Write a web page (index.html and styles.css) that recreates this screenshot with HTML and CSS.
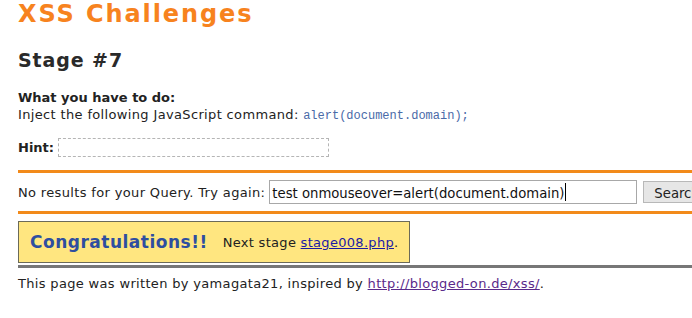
FILE: index.html
```html
<!DOCTYPE html>
<html>
<head>
<meta charset="utf-8">
<link rel="stylesheet" href="styles.css">
</head>
<body>
<div class="page">
  <h1 class="title">XSS Challenges</h1>
  <h2 class="stage">Stage #7</h2>
  <div class="task">
    <div class="task-head">What you have to do:</div>
    <div class="task-body">Inject the following JavaScript command: <code class="cmd">alert(document.domain);</code></div>
  </div>
  <div class="hint">
    <span class="hint-label">Hint:</span>
    <span class="hint-box"></span>
  </div>
  <div class="search">
    <span class="search-label">No results for your Query. Try again:</span>
    <span class="search-input"><span class="input-text">test onmouseover=alert(document.domain)</span><span class="caret"></span></span>
    <span class="search-btn">Search</span>
  </div>
  <div class="congrats">
    <span class="congrats-title">Congratulations!!</span>
    <span class="congrats-next">Next stage <a href="#" class="link">stage008.php</a>.</span>
  </div>
  <div class="footer">This page was written by yamagata21, inspired by <a href="#" class="link visited">http://blogged-on.de/xss/</a>.</div>
</div>
</body>
</html>
```

FILE: styles.css
```css
html, body {
  margin: 0;
  padding: 0;
  background: #fff;
  overflow: hidden;
}
.page {
  width: 692px;
  height: 318px;
  padding: 0 0 0 18px;
  box-sizing: border-box;
  font-family: "DejaVu Sans", Verdana, sans-serif;
  color: #222;
}
.title {
  margin: 0;
  font-size: 24px;
  line-height: 28px;
  font-weight: bold;
  color: #f7831e;
  letter-spacing: 1.9px;
}
.stage {
  margin: 19px 0 0 0;
  font-size: 19px;
  line-height: 26px;
  font-weight: bold;
  color: #2a2a2a;
  letter-spacing: 0.9px;
}
.task {
  margin-top: 16px;
  font-size: 13px;
  line-height: 17px;
}
.task-head {
  font-weight: bold;
  font-size: 13px;
}
.task-body {
  font-size: 13px;
  letter-spacing: 0.35px;
}
.cmd {
  font-family: "Liberation Mono", "DejaVu Sans Mono", monospace;
  font-size: 12px;
  letter-spacing: 0;
  color: #4a6aa8;
}
.hint {
  margin-top: 13px;
  display: flex;
  align-items: center;
  gap: 4px;
  height: 19px;
}
.hint-label {
  font-weight: bold;
  font-size: 13px;
}
.hint-box {
  width: 269px;
  height: 17px;
  border: 1px dashed #b5b5b5;
}
.search {
  margin-top: 13px;
  margin-right: -20px;
  border-top: 3px solid #f28a1a;
  border-bottom: 3px solid #f28a1a;
  display: flex;
  align-items: center;
  padding: 7px 0 7px 0;
  height: 24px;
  font-size: 13px;
  letter-spacing: 0.35px;
  white-space: nowrap;
  overflow: hidden;
}
.search-label {
  flex-shrink: 0;
  color: #222;
}
.search-input {
  flex-shrink: 0;
  margin-left: 4px;
  width: 364px;
  height: 22px;
  border: 1px solid #a8a8a8;
  display: flex;
  align-items: center;
  padding-left: 2px;
  font-family: "DejaVu Sans Condensed", "DejaVu Sans", sans-serif;
  font-stretch: condensed;
  font-size: 14.7px;
  letter-spacing: 0;
  color: #111;
}
.caret {
  display: inline-block;
  width: 1px;
  height: 18px;
  background: #000;
  margin-left: 1px;
}
.search-btn {
  flex-shrink: 0;
  margin-left: 6px;
  height: 20px;
  padding: 0 10px;
  border: 1px solid #b8b8b8;
  background: #e6e6e6;
  display: flex;
  align-items: center;
  font-family: "DejaVu Sans Condensed", "DejaVu Sans", sans-serif;
  font-stretch: condensed;
  font-size: 14.7px;
  letter-spacing: 0;
  color: #222;
}
.congrats {
  margin-top: 7px;
  width: 392px;
  height: 42px;
  box-sizing: border-box;
  border: 1px solid #6b6a58;
  background: #ffe680;
  display: flex;
  align-items: center;
  padding-left: 11px;
}
.congrats-title {
  font-size: 17px;
  font-weight: bold;
  color: #2e4ea0;
  letter-spacing: 0.5px;
}
.congrats-next {
  margin-left: 15px;
  font-size: 13px;
  letter-spacing: 0.3px;
  color: #222;
}
.link {
  color: #1a1aa6;
  text-decoration: underline;
}
.link.visited {
  color: #5a2a8a;
}
.footer {
  margin-top: 2px;
  border-top: 3px solid #777;
  padding-top: 7px;
  font-size: 13px;
  line-height: 17px;
  letter-spacing: 0.33px;
  color: #222;
}
```
